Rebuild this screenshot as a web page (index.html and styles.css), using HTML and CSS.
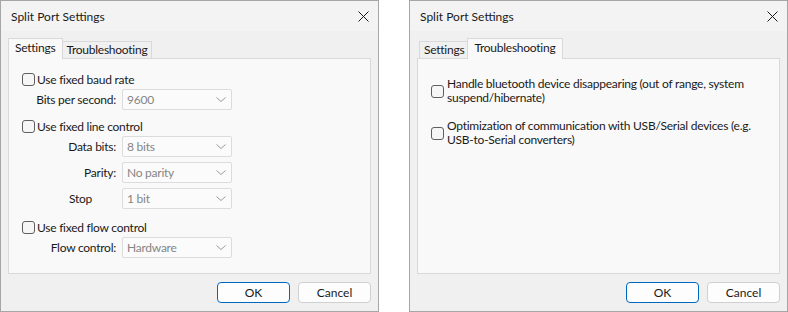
FILE: index.html
```html
<!DOCTYPE html>
<html lang="en">
<head>
    <meta charset="UTF-8">
    <title>Split Port Settings</title>
    <link rel="stylesheet" href="styles.css">
</head>
<body>
    <!-- Settings tab -->
    <div class="dialog">
        <div class="titlebar">
            <span class="title">Split Port Settings</span>
            <svg class="close" width="11" height="11" viewBox="0 0 11 11"><path d="M0.5 0.5L10.5 10.5M10.5 0.5L0.5 10.5" stroke="#1a1a1a" stroke-width="1" fill="none"/></svg>
        </div>
        <div class="dialog-body">
            <div class="tabs">
                <div class="tab active">Settings</div>
                <div class="tab">Troubleshooting</div>
            </div>
            <div class="panel">
                <div class="group">
                    <label class="check-row"><input type="checkbox" class="check"> Use fixed baud rate</label>
                    <div class="field">
                        <span class="field-label">Bits per second:</span>
                        <div class="combo"><span>9600</span><svg width="10" height="5" viewBox="0 0 10 5"><path d="M0.5 0.5L5 4.5L9.5 0.5" stroke="#9a9a9a" fill="none"/></svg></div>
                    </div>
                </div>
                <div class="group line">
                    <label class="check-row"><input type="checkbox" class="check"> Use fixed line control</label>
                    <div class="field">
                        <span class="field-label">Data bits:</span>
                        <div class="combo"><span>8 bits</span><svg width="10" height="5" viewBox="0 0 10 5"><path d="M0.5 0.5L5 4.5L9.5 0.5" stroke="#9a9a9a" fill="none"/></svg></div>
                    </div>
                    <div class="field">
                        <span class="field-label">Parity:</span>
                        <div class="combo"><span>No parity</span><svg width="10" height="5" viewBox="0 0 10 5"><path d="M0.5 0.5L5 4.5L9.5 0.5" stroke="#9a9a9a" fill="none"/></svg></div>
                    </div>
                    <div class="field">
                        <span class="field-label plain">Stop</span>
                        <div class="combo"><span>1 bit</span><svg width="10" height="5" viewBox="0 0 10 5"><path d="M0.5 0.5L5 4.5L9.5 0.5" stroke="#9a9a9a" fill="none"/></svg></div>
                    </div>
                </div>
                <div class="group flow">
                    <label class="check-row"><input type="checkbox" class="check"> Use fixed flow control</label>
                    <div class="field">
                        <span class="field-label">Flow control:</span>
                        <div class="combo"><span>Hardware</span><svg width="10" height="5" viewBox="0 0 10 5"><path d="M0.5 0.5L5 4.5L9.5 0.5" stroke="#9a9a9a" fill="none"/></svg></div>
                    </div>
                </div>
            </div>
            <div class="buttons">
                <button class="btn default">OK</button>
                <button class="btn">Cancel</button>
            </div>
        </div>
    </div>

    <!-- Troubleshooting tab -->
    <div class="dialog">
        <div class="titlebar">
            <span class="title">Split Port Settings</span>
            <svg class="close" width="11" height="11" viewBox="0 0 11 11"><path d="M0.5 0.5L10.5 10.5M10.5 0.5L0.5 10.5" stroke="#1a1a1a" stroke-width="1" fill="none"/></svg>
        </div>
        <div class="dialog-body">
            <div class="tabs">
                <div class="tab">Settings</div>
                <div class="tab active">Troubleshooting</div>
            </div>
            <div class="panel trouble">
                <label class="option"><input type="checkbox" class="check"><span>Handle bluetooth device disappearing (out of range, system suspend/hibernate)</span></label>
                <label class="option"><input type="checkbox" class="check"><span>Optimization of communication with USB/Serial devices (e.g. USB-to-Serial converters)</span></label>
            </div>
            <div class="buttons">
                <button class="btn default">OK</button>
                <button class="btn">Cancel</button>
            </div>
        </div>
    </div>
</body>
</html>
```

FILE: styles.css
```css
body {
    margin: 0;
    background-color: #fff;
    font-family: "Segoe UI", Lato, sans-serif;
    font-size: 12px;
    letter-spacing: -0.25px;
    color: #1a1a1a;
    display: flex;
    gap: 30px;
}

.dialog {
    width: 379px;
    height: 312px;
    box-sizing: border-box;
    border: 1px solid #a6a6a6;
    background-color: #f0f0f0;
    display: flex;
    flex-direction: column;
}

.titlebar {
    height: 30px;
    flex: none;
    background-color: #f3f3f3;
    display: flex;
    align-items: center;
    justify-content: space-between;
    padding: 0 9px 0 10px;
}

.title {
    letter-spacing: 0;
}

.dialog-body {
    flex: 1;
    display: flex;
    flex-direction: column;
    padding: 7px 7px 8px;
}

.tabs {
    display: flex;
    align-items: flex-end;
    height: 20px;
    padding-left: 2px;
}

.tab {
    height: 17px;
    box-sizing: border-box;
    padding: 1px 4px 0;
    line-height: 14px;
    border: 1px solid #d9d9d9;
    border-bottom: 0;
    background-color: #f0f0f0;
}

.tab.active {
    position: relative;
    z-index: 1;
    height: 21px;
    margin: 0 -2px -1px;
    padding: 2px 7px 0 6px;
    background-color: #f9f9f9;
}

.panel {
    height: 216px;
    box-sizing: border-box;
    border: 1px solid #d9d9d9;
    background-color: #f9f9f9;
    padding: 14px 8px 0 13px;
}

.check-row {
    display: flex;
    align-items: center;
    gap: 2px;
    height: 13px;
}

.check {
    appearance: none;
    margin: 0;
    flex: none;
    width: 13px;
    height: 13px;
    box-sizing: border-box;
    border: 1px solid #5f5f5f;
    border-radius: 3px;
    background-color: #f6f6f6;
}

.group.line {
    margin-top: 10px;
}

.group.flow {
    margin-top: 12px;
}

.field {
    display: flex;
    align-items: center;
    margin-top: 3px;
}

.field + .field {
    margin-top: 5px;
}

.field-label {
    width: 94px;
    margin-right: 6px;
    text-align: right;
}

.field-label.plain {
    box-sizing: border-box;
    padding-left: 47px;
    text-align: left;
}

.combo {
    width: 110px;
    height: 21px;
    box-sizing: border-box;
    border: 1px solid #dcdcdc;
    border-radius: 2px;
    background-color: #fbfbfb;
    color: #858585;
    display: flex;
    align-items: center;
    justify-content: space-between;
    padding: 0 5px 0 4px;
}

.panel.trouble {
    padding-top: 18px;
}

.option {
    display: flex;
    align-items: center;
    gap: 3px;
    line-height: 14px;
}

.option + .option {
    margin-top: 14px;
}

.buttons {
    margin-top: 8px;
    display: flex;
    justify-content: flex-end;
    gap: 8px;
}

.btn {
    width: 73px;
    height: 21px;
    padding: 0;
    border: 1px solid #d0d0d0;
    border-radius: 4px;
    background-color: #fdfdfd;
    font: inherit;
    color: #1a1a1a;
}

.btn.default {
    border-color: #0067c0;
}
```
